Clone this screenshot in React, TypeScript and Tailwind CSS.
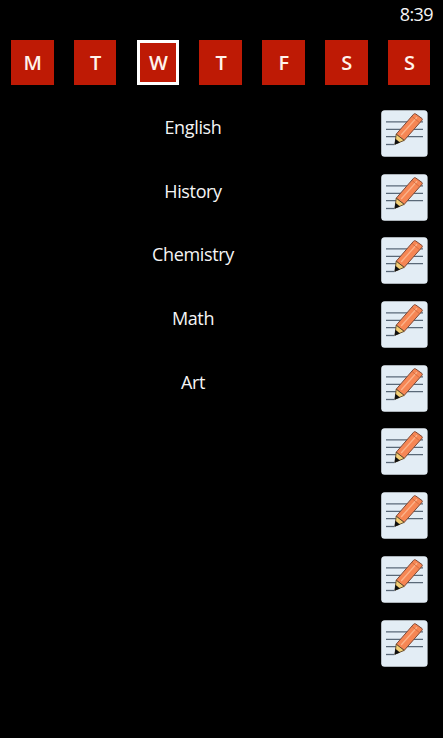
import { useState } from "react";

const DAYS = ["M", "T", "W", "T", "F", "S", "S"];

const LESSONS = ["English", "History", "Chemistry", "Math", "Art", "", "", "", ""];

function NoteIcon() {
    return (
        <svg viewBox="0 0 47 47" className="block h-[47px] w-[47px]">
            <rect x="0.2" y="0.2" width="46.4" height="46.6" rx="3.5" fill="#e3edf5" />
            <g stroke="#5a6978" strokeWidth="1.3">
                <path d="M5 11.8H42" />
                <path d="M5 19.3H42" />
                <path d="M5 26.6H42" />
                <path d="M5 34.5H13.5" />
            </g>
            <path d="M15.2 24.2L32.6 4.2Q33.6 3.2 34.8 4L41 8.5Q41.8 9.2 41 10.2L23.2 30.4Z" fill="#f68654" stroke="#7d4a38" strokeWidth="1" />
            <path d="M20.2 25L36 7.2" stroke="#fbb38b" strokeWidth="1.3" />
            <path d="M31 6.4L38.4 12.6" stroke="#c9683e" strokeWidth="0.8" />
            <path d="M15.2 24.2L23.2 30.4L14 34.2Z" fill="#f3cf74" stroke="#5d4526" strokeWidth="0.9" />
            <path d="M14.4 28.8L19 32.4L13.6 34.8Z" fill="#111111" />
        </svg>
    );
}

export default function App() {
    const [day, setDay] = useState(2);

    return (
        <div className="flex h-[738px] w-[443px] flex-col overflow-hidden bg-black font-['Open_Sans','Noto_Sans',sans-serif] text-[#f5f5f5]">
            <div className="flex h-10 justify-end pt-[3px] pr-[10px] text-[18px] leading-[22px] tracking-[-0.6px]">8:39</div>

            <div className="flex justify-between pr-[12.7px] pl-[11px]">
                {DAYS.map((d, i) => (
                    <button
                        key={i}
                        type="button"
                        onClick={() => setDay(i)}
                        className={`flex h-[44.5px] w-[42.6px] items-center justify-center bg-[#be1a05] pt-[2px] pl-px text-[20px] font-semibold text-[#fff3ec] ${i === day ? "border-[3px] border-white" : ""
                            }`}
                    >
                        {d}
                    </button>
                ))}
            </div>

            <div className="mt-[25.5px] flex flex-col gap-[16.7px]">
                {LESSONS.map((lesson, i) => (
                    <div key={i} className="flex h-[47px] pr-[15px] pl-[5px]">
                        <div className="flex-1 pt-[5px] text-center text-[18px] leading-[25px] font-medium tracking-[-0.35px]">{lesson}</div>
                        <button type="button" aria-label="Edit">
                            <NoteIcon />
                        </button>
                    </div>
                ))}
            </div>
        </div>
    );
}
